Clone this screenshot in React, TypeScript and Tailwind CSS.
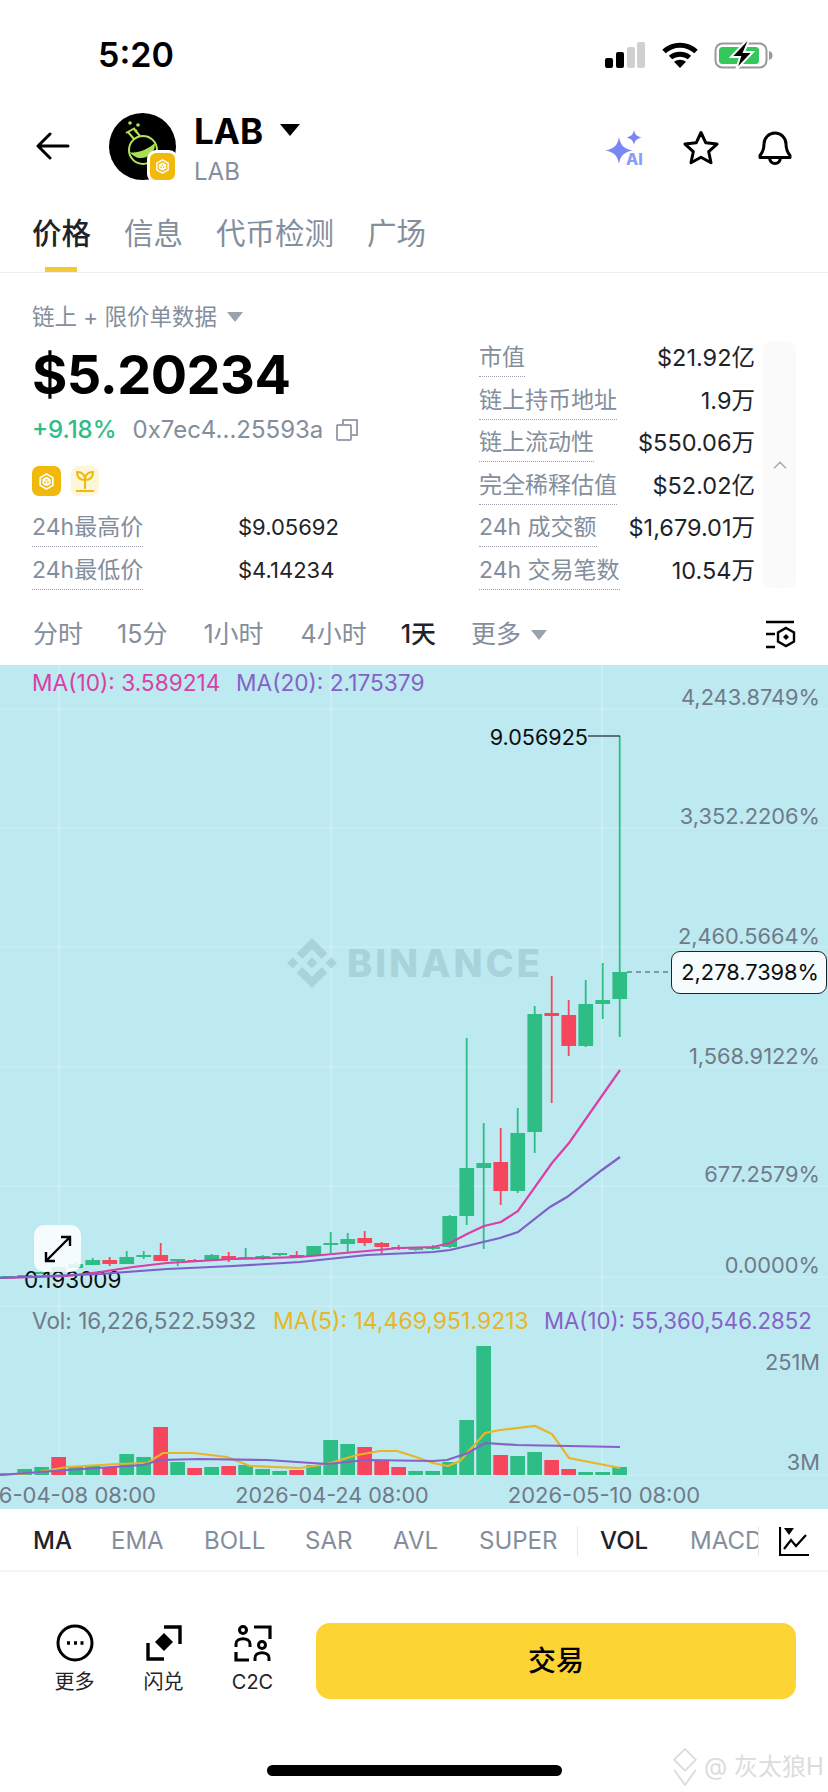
import { ChevronUp } from 'lucide-react';

const GREEN = '#2ebd85';
const RED = '#f6465d';

// candles from newest to oldest: color, body top, body bottom, wick top, wick bottom
const candles: [string, number, number, number, number][] = [
  ['g', 972, 999, 736, 1037],
  ['g', 1000, 1004, 963, 1019],
  ['g', 1004, 1046, 980, 1047],
  ['r', 1015, 1046, 1000, 1056],
  ['r', 1013, 1016, 976, 1103],
  ['g', 1014, 1132, 1006, 1153],
  ['g', 1133, 1191, 1108, 1193],
  ['r', 1162, 1191, 1128, 1205],
  ['g', 1163, 1168, 1123, 1249],
  ['g', 1168, 1216, 1038, 1225],
  ['g', 1216, 1247, 1215, 1248],
  ['g', 1247, 1248, 1245, 1250],
  ['g', 1248, 1249, 1247, 1251],
  ['r', 1247, 1249, 1245, 1250],
  ['r', 1243, 1247, 1242, 1254],
  ['r', 1238, 1243, 1231, 1246],
  ['g', 1239, 1244, 1233, 1252],
  ['g', 1243, 1244, 1232, 1253],
  ['g', 1246, 1256, 1246, 1256],
  ['r', 1255, 1257, 1251, 1258],
  ['g', 1253, 1254, 1253, 1256],
  ['g', 1256, 1257, 1255, 1260],
  ['g', 1257, 1258, 1248, 1258],
  ['r', 1256, 1260, 1252, 1262],
  ['g', 1255, 1260, 1254, 1260],
  ['r', 1260, 1261, 1259, 1262],
  ['g', 1259, 1261, 1259, 1266],
  ['r', 1255, 1261, 1243, 1261],
  ['g', 1255, 1256, 1251, 1259],
  ['g', 1257, 1264, 1251, 1264],
  ['r', 1260, 1264, 1257, 1266],
  ['g', 1260, 1265, 1258, 1265],
  ['g', 1264, 1268, 1262, 1268],
  ['g', 1267, 1272, 1266, 1272],
  ['g', 1272, 1274, 1271, 1274],
  ['g', 1275, 1276, 1275, 1277],
  ['g', 1276, 1277, 1276, 1278],
];

const volumes: [string, number][] = [
  ['g', 1467], ['g', 1472], ['g', 1472], ['r', 1469], ['r', 1460], ['g', 1452], ['g', 1456], ['r', 1455],
  ['g', 1346], ['g', 1420], ['g', 1462], ['g', 1471], ['g', 1471], ['r', 1467], ['r', 1460], ['r', 1447],
  ['g', 1444], ['g', 1440], ['g', 1465], ['r', 1470], ['g', 1471], ['g', 1469], ['g', 1465], ['r', 1466],
  ['g', 1467], ['r', 1468], ['g', 1462], ['r', 1427], ['g', 1457], ['g', 1454], ['r', 1467], ['g', 1465],
  ['g', 1467], ['r', 1457], ['g', 1467], ['g', 1469], ['g', 1473],
];

const ma10 = '0,1278 67,1276 100,1272 133,1267 167,1263 233,1259 300,1257 333,1254 367,1251 400,1248 433,1247 450,1243 467,1234 484,1226 501,1222 518,1211 552,1163 569,1143 620,1070';
const ma20 = '0,1278 100,1274 167,1269 233,1266 300,1262 367,1255 433,1252 450,1250 467,1246 483,1242 500,1238 518,1232 550,1207 567,1197 602,1170 620,1157';
const volMa5 = '0,1475 33,1473 67,1467 117,1464 147,1463 163,1453 193,1453 227,1457 250,1466 300,1468 327,1464 357,1455 380,1451 397,1451 410,1455 433,1463 448,1466 460,1461 485,1433 500,1430 535,1426 552,1434 569,1458 620,1468';
const volMa10 = '0,1475 67,1470 143,1465 160,1460 200,1459 267,1460 327,1464 367,1460 433,1461 447,1460 468,1453 485,1443 517,1445 620,1447';

const axisLabels = [
  { y: 705, text: '4,243.8749%' },
  { y: 824, text: '3,352.2206%' },
  { y: 944, text: '2,460.5664%' },
  { y: 1064, text: '1,568.9122%' },
  { y: 1182, text: '677.2579%' },
  { y: 1273, text: '0.0000%' },
  { y: 1370, text: '251M' },
  { y: 1470, text: '3M' },
];

const statsLeft = [
  ['24h最高价', '$9.05692'],
  ['24h最低价', '$4.14234'],
];

const statsRight = [
  ['市值', '$21.92亿'],
  ['链上持币地址', '1.9万'],
  ['链上流动性', '$550.06万'],
  ['完全稀释估值', '$52.02亿'],
  ['24h 成交额', '$1,679.01万'],
  ['24h 交易笔数', '10.54万'],
];

function BnbCube({ size = 18 }: { size?: number }) {
  return (
    <svg width={size} height={size} viewBox="0 0 24 24" fill="none" stroke="#fff" strokeWidth="2.4" strokeLinejoin="round">
      <path d="M12 2.5l8 4.6v9.8l-8 4.6-8-4.6V7.100z" strokeWidth="2" />
      <path d="M12 7.500l4 2.300v4.500l-4 2.300-4-2.300V9.800z" />
      <path d="M12 12v4.500M8 9.800l4 2.200 4-2.200" strokeWidth="1.800" />
    </svg>
  );
}

function StatusBar() {
  return (
    <div className="h-[100px] pt-[34px] pl-[98px] pr-[54px] flex justify-between items-start">
      <span className="text-[34px] leading-[42px] font-semibold text-black">5:20</span>
      <div className="flex items-center gap-[16px] pt-[6px]">
        <svg width="42" height="28" viewBox="0 0 42 28">
          <rect x="1" y="17" width="8" height="10" rx="2" fill="#000" />
          <rect x="12" y="11" width="8" height="16" rx="2" fill="#000" />
          <rect x="23" y="6" width="8" height="21" rx="2" fill="#d0d0d0" />
          <rect x="33" y="1" width="8" height="26" rx="2" fill="#d0d0d0" />
        </svg>
        <svg width="36" height="28" viewBox="0 0 36 28" fill="none" stroke="#000" strokeWidth="5">
          <path d="M2 10.500C11 2 25 2 34 10.500" />
          <path d="M8.500 16.500C13.500 12 22.500 12 27.500 16.500" />
          <path d="M18 27l-6-6.200c3.300-2.800 8.700-2.800 12 0z" fill="#000" stroke="none" />
        </svg>
        <svg width="60" height="30" viewBox="0 0 60 30">
          <rect x="1.500" y="3.500" width="51" height="24" rx="7" fill="none" stroke="#999" strokeWidth="2" />
          <rect x="5" y="7" width="40" height="17" rx="3.500" fill="#34c759" />
          <path d="M55 11c2.500.6 3.500 2.500 3.500 4.500S57.500 19.400 55 20z" fill="#999" />
          <path d="M33 0L17 17h9l-4 13 17-18h-9l5-12z" fill="#000" stroke="#fff" strokeWidth="2" />
        </svg>
      </div>
    </div>
  );
}

function Header() {
  return (
    <div className="h-[92px] pl-[36px] pr-[35px] flex items-center">
      <svg width="34" height="28" viewBox="0 0 34 28" fill="none" stroke="#000" strokeWidth="3" strokeLinecap="round" strokeLinejoin="round" className="mr-[39px]">
        <path d="M2 14h30M14 2L2 14l12 12" />
      </svg>
      <div className="relative w-[67px] h-[67px] rounded-full bg-black mt-[1px] mr-[18px]">
        <svg width="67" height="67" viewBox="0 0 67 67" fill="none" stroke="#b6e25a">
          <path d="M20.500 39C27 41 38 37 46 30A14 14 0 0 1 20.500 39z" fill="#a8e04e" stroke="none" />
          <circle cx="34" cy="37" r="14" strokeWidth="2" />
          <path d="M25 26l-6-7M31 23l-6-7M17 20l9-5" strokeWidth="2" />
          <circle cx="21" cy="10" r="1.800" fill="#b6e25a" stroke="none" />
          <circle cx="29" cy="12" r="1.800" fill="#b6e25a" stroke="none" />
          <circle cx="27" cy="18" r="1.400" fill="#b6e25a" stroke="none" />
        </svg>
        <div className="absolute -right-[2px] -bottom-[3px] w-[31px] h-[33px] rounded-[9px] bg-[#f0b90b] border-[3px] border-white flex items-center justify-center">
          <BnbCube size={17} />
        </div>
      </div>
      <div className="flex flex-col mt-[7px]">
        <div className="flex items-center">
          <span className="text-[35px] leading-[38px] font-bold text-black">LAB</span>
          <span className="ml-[17px] mb-[3px] w-0 h-0 border-l-[10px] border-r-[10px] border-t-[12px] border-l-transparent border-r-transparent border-t-black" />
        </div>
        <span className="mt-[7px] text-[24px] leading-[30px] text-[#848e9c]">LAB</span>
      </div>
      <div className="ml-auto flex items-center gap-[38px] mt-[4px]">
        <svg width="42" height="37" viewBox="0 0 42 37">
          <path d="M16 7c1.700 8.500 4.500 11.500 13.500 13.500C20.500 22.500 17.700 25.500 16 34c-1.700-8.500-4.500-11.500-13.500-13.500C11.500 18.500 14.300 15.500 16 7z" fill="#7b86f5" />
          <path d="M31 0c.9 4.500 2.500 6.100 7.500 7.500-5 1.400-6.600 3-7.500 7.500-.9-4.500-2.500-6.100-7.500-7.500C28.500 6.100 30.100 4.500 31 0z" fill="#7b86f5" />
          <text x="23" y="35" fontSize="16" fontWeight="800" fill="#8b9cf8" fontFamily="Inter, sans-serif">AI</text>
        </svg>
        <svg width="36" height="36" viewBox="0 0 36 36" fill="none" stroke="#000" strokeWidth="3" strokeLinejoin="round">
          <path d="M18 2.500l4.800 10.300 11.200 1.300-8.300 7.600 2.300 11.100L18 27.300 8 32.800l2.300-11.100L2 14.100l11.200-1.300z" />
        </svg>
        <svg width="36" height="38" viewBox="0 0 34 38" fill="none" stroke="#000" strokeWidth="3" strokeLinejoin="round" className="-mt-[3px]">
          <path d="M6 16a11 11 0 0 1 22 0c0 6 2 9 4 11.500v2H2v-2C4 25 6 22 6 16z" />
          <path d="M11.500 30c.5 3.500 2.800 5.500 5.500 5.500s5-2 5.500-5.500" />
        </svg>
      </div>
    </div>
  );
}

function Tabs() {
  const items = ['价格', '信息', '代币检测', '广场'];
  return (
    <div className="h-[81px] border-b border-[#eaecef] pl-[32px] pt-[21px] flex gap-[33px] items-start">
      {items.map((t, i) => (
        <div key={t} className="relative h-[59px]">
          <span className={`text-[29.500px] leading-[40px] ${i === 0 ? 'text-[#1e2329] font-medium' : 'text-[#848e9c]'}`}>{t}</span>
          {i === 0 && <div className="absolute left-[13px] bottom-0 w-[32px] h-[5px] bg-[#f0cb35]" />}
        </div>
      ))}
    </div>
  );
}

function DottedLabel({ children }: { children: string }) {
  return (
    <span className="text-[23px] leading-[33px] h-[36px] text-[#848e9c] border-b border-dotted border-[#9aa2ad] whitespace-nowrap">{children}</span>
  );
}

function CoinInfo() {
  return (
    <div className="h-[337px] pl-[32px] pr-[32px] pt-[29px] flex">
      <div className="w-[447px] shrink-0">
        <div className="flex items-center h-[30px]">
          <span className="text-[22.500px] leading-[30px] text-[#848e9c]">链上 + 限价单数据</span>
          <span className="ml-[10px] w-0 h-0 border-l-[8px] border-r-[8px] border-t-[10px] border-l-transparent border-r-transparent border-t-[#9aa2ad]" />
        </div>
        <div className="text-[54px] leading-[68px] font-bold text-black mt-[9px] tracking-[-0.5px]">$5.20234</div>
        <div className="flex items-center mt-[5px] h-[32px]">
          <span className="text-[24px] font-medium text-[#2ebd85]">+9.18%</span>
          <span className="ml-[16px] text-[24px] text-[#848e9c]">0x7ec4...25593a</span>
          <svg width="22" height="22" viewBox="0 0 22 22" fill="none" stroke="#9aa2ad" strokeWidth="2" className="ml-[13px]">
            <rect x="1" y="6" width="14" height="15" rx="1" />
            <path d="M7 6V1h14v15h-6" />
          </svg>
        </div>
        <div className="flex gap-[10px] mt-[20px]">
          <div className="w-[29px] h-[30px] rounded-[7px] bg-[#f0b90b] flex items-center justify-center">
            <BnbCube size={19} />
          </div>
          <div className="w-[28px] h-[30px] rounded-[7px] bg-[#fdf6d8] flex items-center justify-center">
            <svg width="22" height="24" viewBox="0 0 22 24" fill="none" stroke="#f0b90b" strokeWidth="2">
              <path d="M11 20V10M2 22h18M11 11C6 11 3 8 3 3c5 0 8 2 8 8zM11 11c5 0 8-3 8-8-5 0-8 2-8 8z" />
            </svg>
          </div>
        </div>
        <div className="mt-[15px] flex flex-col gap-[6.500px]">
          {statsLeft.map(([k, v]) => (
            <div key={k} className="flex items-start h-[36px]">
              <div className="w-[206px] flex">
                <DottedLabel>{k}</DottedLabel>
              </div>
              <span className="text-[22px] leading-[33px] text-[#1e2329]">{v}</span>
            </div>
          ))}
        </div>
      </div>
      <div className="w-[276px] shrink-0 flex flex-col gap-[6.500px] pt-[39px]">
        {statsRight.map(([k, v]) => (
          <div key={k} className="flex justify-between items-start h-[36px]">
            <DottedLabel>{k}</DottedLabel>
            <span className="text-[23.500px] leading-[33px] text-[#1e2329] whitespace-nowrap">{v}</span>
          </div>
        ))}
      </div>
      <div className="ml-[8px] mt-[40px] w-[33px] h-[246px] rounded-[8px] bg-[#fafafa] flex items-center justify-center">
        <ChevronUp className="w-[22px] h-[22px] text-[#a8b0ba]" strokeWidth={1.800} />
      </div>
    </div>
  );
}

function TimeBar() {
  const items = [
    { t: '分时', gap: 'mr-[34px]' },
    { t: '15分', gap: 'mr-[36px]' },
    { t: '1小时', gap: 'mr-[37px]' },
    { t: '4小时', gap: 'mr-[34px]' },
    { t: '1天', gap: 'mr-[35px]' },
  ];
  return (
    <div className="h-[55px] pb-[6px] flex items-center pl-[33px] pr-[32px]">
      {items.map(({ t, gap }) => (
        <span key={t} className={`text-[25px] ${gap} ${t === '1天' ? 'text-[#1e2329] font-medium' : 'text-[#848e9c]'}`}>{t}</span>
      ))}
      <span className="text-[25px] text-[#848e9c]">更多</span>
      <span className="ml-[10px] w-0 h-0 border-l-[8px] border-r-[8px] border-t-[10px] border-l-transparent border-r-transparent border-t-[#9aa2ad]" />
      <svg width="32" height="30" viewBox="0 0 32 30" fill="none" stroke="#000" strokeWidth="2.400" className="ml-auto">
        <path d="M2 2h28M2 14h9M2 27h9" />
        <path d="M22 8l8 4.500v9L22 26l-8-4.500v-9z" />
        <path d="M22 14l3 3-3 3-3-3z" fill="#000" stroke="none" />
      </svg>
    </div>
  );
}

function Chart() {
  return (
    <div className="relative h-[844px] bg-[#bde9f0]">
      <svg width="828" height="844" viewBox="0 665 828 844" className="block font-['Inter',sans-serif]">
        {[709, 828, 947, 1067, 1186, 1277, 1306, 1475].map((y) => (
          <line key={y} x1="0" x2="828" y1={y} y2={y} stroke="#d6f0f5" strokeWidth="1.200" />
        ))}
        {[59, 331, 602].map((x) => (
          <line key={x} x1={x} x2={x} y1="665" y2="1475" stroke="#d6f0f5" strokeWidth="1.200" />
        ))}

        {/* watermark */}
        <g fill="#a8d3da">
          <path
            transform="translate(287 938) scale(2.083)"
            d="M16.624 13.920l2.718 2.715-7.353 7.353-7.353-7.352 2.718-2.716 4.635 4.659 4.636-4.659zm4.637-4.637L24 12l-2.715 2.716L18.568 12l2.693-2.716zm-9.272.001l2.716 2.691-2.716 2.718L9.272 12l2.716-2.715zm-9.272-.001L5.409 12l-2.691 2.692L0 12l2.716-2.716zM11.989.012l7.353 7.329-2.718 2.715-4.635-4.635-4.636 4.659-2.717-2.715 7.353-7.353z"
          />
          <text x="347" y="977" fontSize="38" fontWeight="800" letterSpacing="3">BINANCE</text>
        </g>

        {volumes.map(([c, top], k) => (
          <rect key={k} x={612.300 - 17 * k} y={top} width="14.700" height={1475 - top} fill={c === 'g' ? GREEN : RED} />
        ))}
        <polyline points={volMa5} fill="none" stroke="#e8b625" strokeWidth="2.200" />
        <polyline points={volMa10} fill="none" stroke="#8661c9" strokeWidth="2.200" />

        {candles.map(([c, bt, bb, wt, wb], k) => {
          const x = 619.700 - 17 * k;
          const fill = c === 'g' ? GREEN : RED;
          return (
            <g key={k}>
              <rect x={x - 0.900} y={wt} width="1.800" height={wb - wt} fill={fill} />
              <rect x={x - 7.300} y={bt} width="14.700" height={Math.max(bb - bt, 2)} fill={fill} />
            </g>
          );
        })}

        <text x="24" y="1288" fontSize="22.500" fill="#0b0e11">0.193009</text>
        <polyline points={ma10} fill="none" stroke="#d93fa6" strokeWidth="2.200" />
        <polyline points={ma20} fill="none" stroke="#7f5fc8" strokeWidth="2.200" />

        <line x1="588" x2="620" y1="736" y2="736" stroke="#1e2329" strokeWidth="1.200" />
        <text x="588" y="745" textAnchor="end" fontSize="21.600" fill="#0b0e11">9.056925</text>
        <line x1="627" x2="670" y1="972" y2="972" stroke="#474d57" strokeWidth="1.200" strokeDasharray="5 4" />

        {axisLabels.map((l) => (
          <text key={l.text} x="820" y={l.y} textAnchor="end" fontSize="21.800" fill="#707a8a">{l.text}</text>
        ))}

        <text x="32" y="691" fontSize="22.700" fill="#d93fa6">MA(10): 3.589214</text>
        <text x="236" y="691" fontSize="22.700" fill="#8661c9">MA(20): 2.175379</text>
        <text x="32" y="1329" fontSize="22.500" fill="#707a8a">Vol: 16,226,522.5932</text>
        <text x="273" y="1329" fontSize="23" fill="#e8b625">MA(5): 14,469,951.9213</text>
        <text x="544" y="1329" fontSize="22.200" fill="#8661c9">MA(10): 55,360,546.2852</text>

        <text x="156" y="1503" textAnchor="end" fontSize="22" fill="#707a8a">2026-04-08 08:00</text>
        <text x="332" y="1503" textAnchor="middle" fontSize="21.600" fill="#707a8a">2026-04-24 08:00</text>
        <text x="604" y="1503" textAnchor="middle" fontSize="22" fill="#707a8a">2026-05-10 08:00</text>
      </svg>

      {/* current price tag */}
      <div className="absolute left-[671px] top-[286px] w-[156px] h-[43px] rounded-[9px] border border-[#1e2329] bg-[#f6fcfd] flex items-center justify-end pr-[7px] text-[21.800px] text-[#0b0e11]">
        2,278.7398%
      </div>

      {/* fullscreen button */}
      <div className="absolute left-[34px] top-[560px] w-[47px] h-[47px] rounded-[10px] bg-white/85 flex items-center justify-center">
        <svg width="30" height="30" viewBox="0 0 30 30" fill="none" stroke="#000" strokeWidth="2.400">
          <path d="M3 27L27 3M18 3h9v9M3 18v9h9" />
        </svg>
      </div>
    </div>
  );
}

function Indicators() {
  const items = [
    { t: 'MA', w: 78, active: true },
    { t: 'EMA', w: 93 },
    { t: 'BOLL', w: 101 },
    { t: 'SAR', w: 88 },
    { t: 'AVL', w: 86 },
    { t: 'SUPER', w: 98 },
  ];
  return (
    <div className="h-[63px] pt-[3px] border-b-2 border-[#f5f5f5] pl-[33px] flex items-center text-[24px]">
      {items.map((i) => (
        <span key={i.t} style={{ width: i.w }} className={i.active ? 'text-[#1e2329] font-medium' : 'text-[#848e9c]'}>{i.t}</span>
      ))}
      <div className="w-px h-[30px] bg-[#e6e8ea]" />
      <span className="ml-[22px] w-[90px] text-[#1e2329] font-medium">VOL</span>
      <div className="w-[68px] overflow-hidden text-[#848e9c]">MACD</div>
      <div className="w-px h-[30px] bg-[#e6e8ea]" />
      <svg width="30" height="30" viewBox="0 0 30 30" fill="none" stroke="#000" strokeWidth="2.200" className="ml-[20px]">
        <path d="M1 1v28h29" />
        <path d="M5 23l7-9 5 6 10-11" />
        <path d="M5 2h10l-5 7z" fill="#000" stroke="none" />
      </svg>
    </div>
  );
}

function BottomActions() {
  return (
    <div className="flex-1 relative">
      <div className="pl-[54px] pr-[32px] pt-[52px] flex items-start">
        <div className="w-[41px] flex flex-col items-center mr-[48px]">
          <svg width="38" height="38" viewBox="0 0 38 38" fill="none" stroke="#000" strokeWidth="3">
            <circle cx="19" cy="19" r="17" />
            <path d="M11 19h3M18 19h3M24.500 19h3" strokeWidth="3.500" />
          </svg>
          <span className="mt-[7px] text-[20px] leading-[26px] text-[#1e2329] whitespace-nowrap">更多</span>
        </div>
        <div className="w-[41px] flex flex-col items-center mr-[48px]">
          <svg width="38" height="38" viewBox="0 0 38 38" fill="none" stroke="#000" strokeWidth="3.400">
            <path d="M19 3h16v17M3 19v16h16" />
            <path d="M19 9l9 9-9 9-9-9z" fill="#000" stroke="none" />
          </svg>
          <span className="mt-[7px] text-[20px] leading-[26px] text-[#1e2329] whitespace-nowrap">闪兑</span>
        </div>
        <div className="w-[41px] flex flex-col items-center mr-[43px]">
          <svg width="38" height="38" viewBox="0 0 38 38" fill="none" stroke="#000" strokeWidth="3">
            <circle cx="9" cy="6" r="3.500" />
            <path d="M2 23v-3c0-7 14-7 14 0v3" />
            <circle cx="28" cy="21" r="3.500" />
            <path d="M21 37v-3c0-7 14-7 14 0v3" />
            <path d="M20 3h16v12M2 28v8h13" strokeWidth="3.200" />
          </svg>
          <span className="mt-[7px] text-[20px] leading-[26px] text-[#1e2329] whitespace-nowrap">C2C</span>
        </div>
        <div className="flex-1 -mt-[1px] h-[76px] rounded-[14px] bg-[#fcd535] flex items-center justify-center text-[28px] font-medium text-black">
          交易
        </div>
      </div>
      <div className="mt-[66px] mx-auto w-[295px] h-[11px] rounded-full bg-black" />
      {/* watermark over the corner */}
      <div className="absolute left-[672px] top-[176px] flex items-center gap-[6px] text-[#dcdcdc]">
        <svg width="26" height="38" viewBox="0 0 28 42" fill="none" stroke="#dcdcdc" strokeWidth="2">
          <path d="M14 1l12 12-12 12L2 13z" />
          <path d="M2 24l12 17 12-17" />
        </svg>
        <span className="text-[24px] leading-[32px] whitespace-nowrap">@ 灰太狼H</span>
      </div>
    </div>
  );
}

export default function App() {
  return (
    <div className="w-[828px] h-[1792px] overflow-hidden bg-white flex flex-col font-['Inter','Noto_Sans_CJK_SC',sans-serif]">
      <StatusBar />
      <Header />
      <Tabs />
      <CoinInfo />
      <TimeBar />
      <Chart />
      <Indicators />
      <BottomActions />
    </div>
  );
}
